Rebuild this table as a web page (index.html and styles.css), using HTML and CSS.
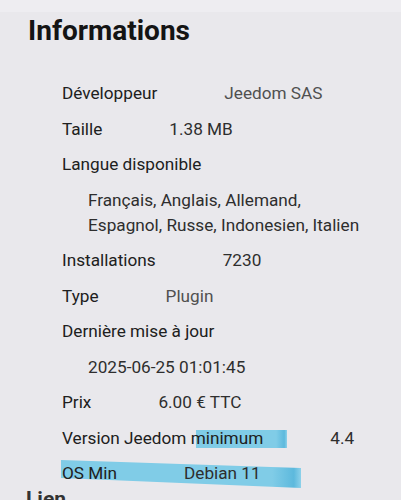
FILE: index.html
```html
<!DOCTYPE html>
<html lang="fr">
<head>
<meta charset="utf-8">
<link rel="stylesheet" href="styles.css">
</head>
<body>
<div class="topband"></div>
<main class="page">
  <h1 class="title">Informations</h1>
  <ul class="info">
    <li class="row"><span class="label">Développeur</span><span class="value muted">Jeedom SAS</span></li>
    <li class="row"><span class="label">Taille</span><span class="value">1.38 MB</span></li>
    <li class="row"><span class="label">Langue disponible</span></li>
    <li class="row sub"><span class="value">Français, Anglais, Allemand, Espagnol, Russe, Indonesien, Italien</span></li>
    <li class="row"><span class="label">Installations</span><span class="value">7230</span></li>
    <li class="row"><span class="label">Type</span><span class="value muted">Plugin</span></li>
    <li class="row"><span class="label">Dernière mise à jour</span></li>
    <li class="row sub"><span class="value">2025-06-25 01:01:45</span></li>
    <li class="row"><span class="label">Prix</span><span class="value">6.00 € TTC</span></li>
    <li class="row mark-row"><span class="hl hl-one"></span><span class="label">Version Jeedom minimum</span><span class="value">4.4</span></li>
    <li class="row mark-row"><span class="hl hl-two"></span><span class="label">OS Min</span><span class="value">Debian 11</span></li>
  </ul>
  <h2 class="subtitle">Lien</h2>
</main>
</body>
</html>
```
FILE: styles.css
```css
html, body {
  margin: 0;
  padding: 0;
}
body {
  background: #e9e8ec;
  font-family: Roboto, "Noto Sans", sans-serif;
  color: #222;
  overflow: hidden;
  height: 500px;
}
.topband {
  height: 12px;
  background: #eeedf1;
}
.page {
  padding: 3px 30px 0 28px;
}
.title {
  margin: 0;
  font-size: 28px;
  line-height: 32px;
  font-weight: 700;
  color: #141414;
}
.info {
  list-style: none;
  margin: 34px 0 0 0;
  padding: 0 0 0 34px;
  display: flex;
  flex-direction: column;
  gap: 10.5px;
}
.row {
  position: relative;
  display: flex;
  gap: 67px;
  font-size: 17.2px;
  line-height: 25px;
}
.row.sub {
  padding-left: 26px;
}
.label {
  position: relative;
  z-index: 1;
  color: #202020;
}
.value {
  position: relative;
  z-index: 1;
  color: #2e2e2e;
}
.value.muted {
  color: #505050;
}
.hl {
  position: absolute;
  z-index: 0;
  background: linear-gradient(to right, #80cce7 0%, #80cce7 88%, #5db9dd 97%, #8dd1ea 100%);
}
.hl-one {
  left: 134px;
  top: 4px;
  width: 91px;
  height: 18px;
}
.hl-two {
  left: -1px;
  top: -1px;
  width: 240px;
  height: 28px;
  clip-path: polygon(0 0, 100% 8px, 100% 100%, 0 18px);
}
.subtitle {
  margin: 0 0 0 -2px;
  font-size: 21px;
  line-height: 26px;
  font-weight: 700;
  color: #333;
}
```
